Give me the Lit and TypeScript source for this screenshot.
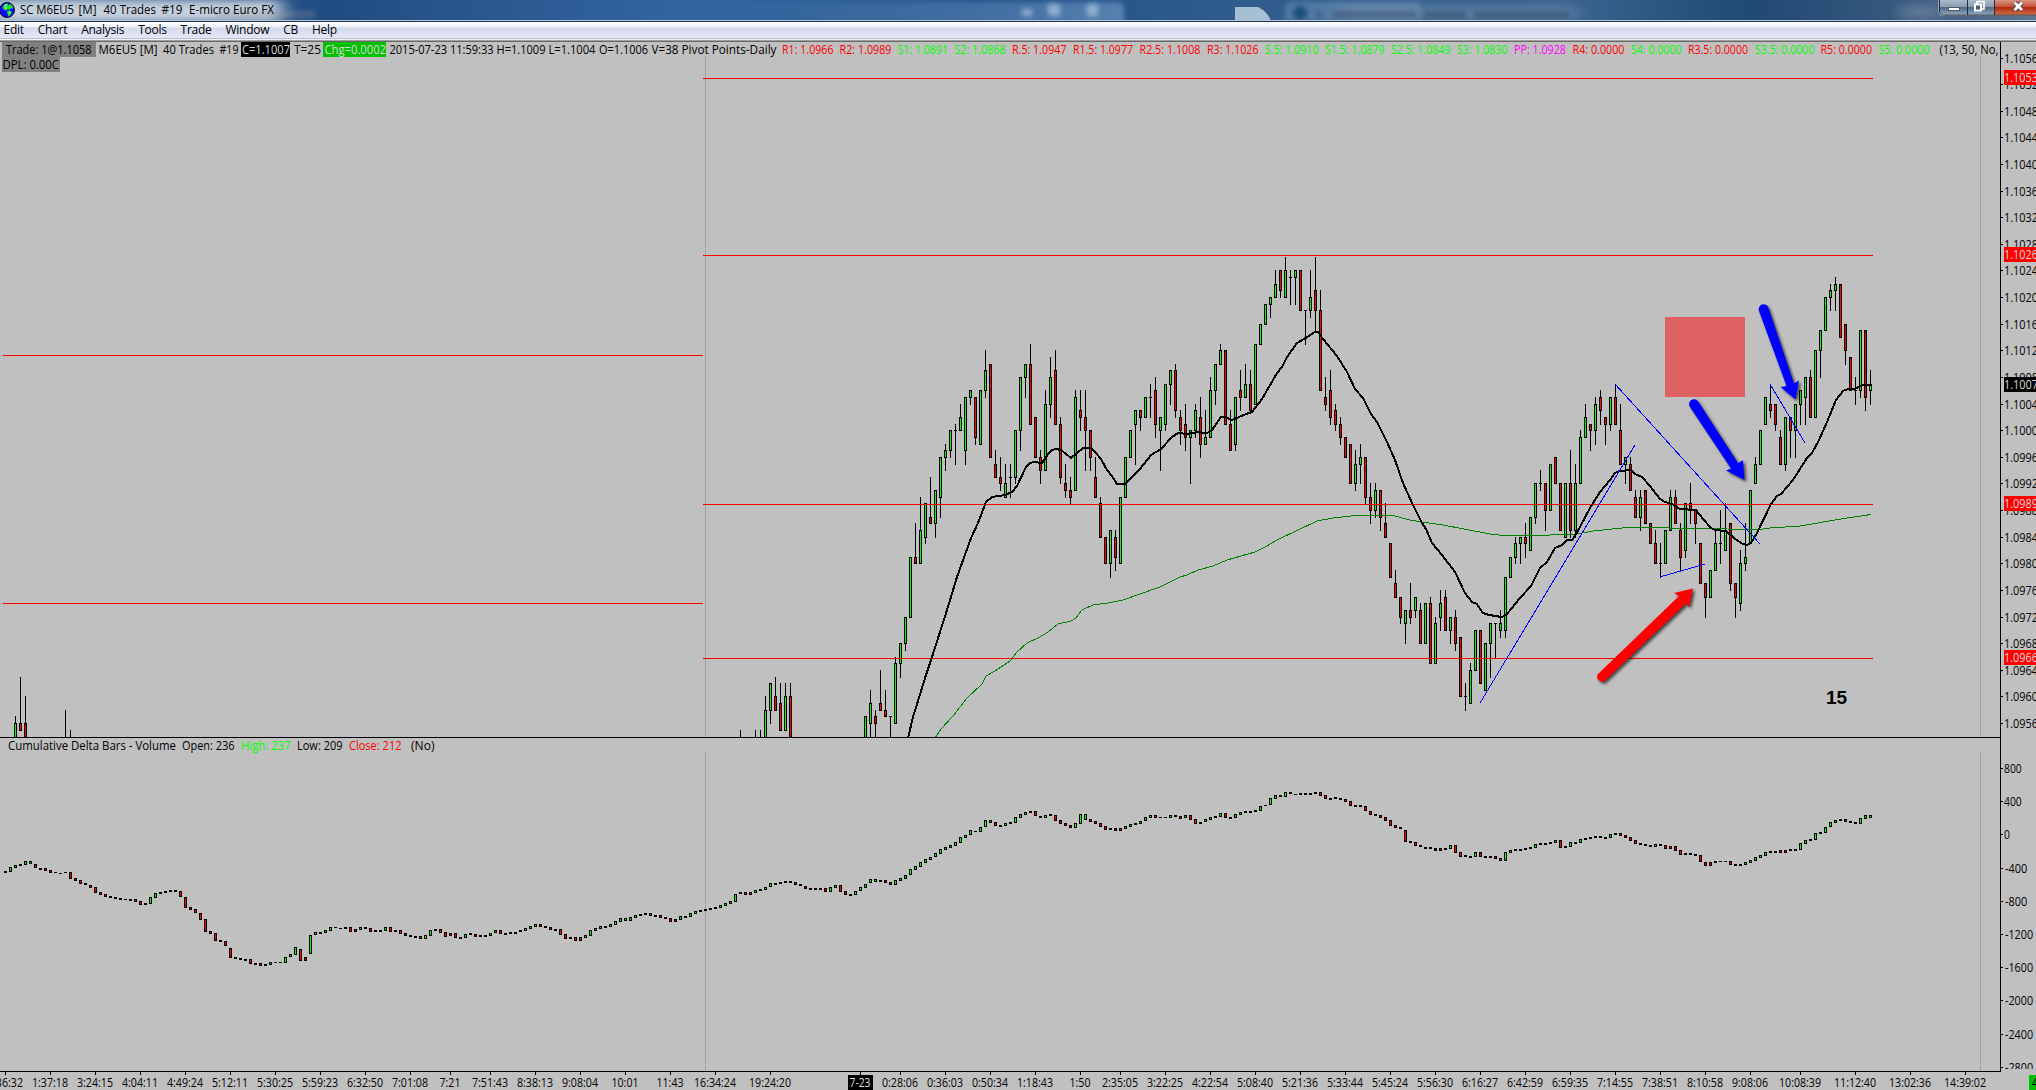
import { LitElement, html, svg, css } from "lit";
import { customElement, property } from "lit/decorators.js";

const BAR_STEP = 5;

// Candles are written high/top-bottom/low plus g (up) or r (down), in ticks
// below 1.1056. High and low are left out when the candle has no wick there.
const PRICE_RUNS: [number, string][] = [
  [15, "99/100-104g 93/100-101r 96/100-104r"],
  [65, "98/104-104g 101/104-104g"],
  [740, "101/104-104g"],
  [755, `101/104-104g 101/104-104g 96/98-104g 94-98/100g 93/96-98r 94/97-101r 94/96-101g
    94/96-104r`],
  [865, `99-104g 95/97-100/104g 98/99-100/104r 92/97-98r 95/98-99r 99-99/104g 90/91-100g
    88-91/93g 84-88/89g 75-84g 70/75-76r 66/71-76g 67-72/73g 63/69-70r 65-70/72g
    60-66/69g 58/59-60/62g 56-59/60g 55/56-56/61g 52/54-56g 51-59/61g 50-51/52g
    51-57/58r 50-58g 44/47-50/51g 46-60r 59/61-63r 60/63-64/65r 61/64-66g 61/63-63/66g
    56-63/64g 48-56/59g 46-48/51g 43/46-55r 54-60r 59/60-62/64r 50/52-62g 45/48-52/54g
    44/47-55r 54/55-63/64r 61/64-65/66r 63/65-66/67r 50/51-65g 50/53-54/56r 50/54-56/62r
    56-60/62r 60/63-66r 66/67-72r 72-76r 71-76/78g 71/72-75/77r 66-76g 60-66g 56-60g
    53-55/61g 53-54/56r 51-54g 49/51-51/54g 48/50-55/57r 54-56/62g 49-55/56g 47-49/52g
    46/47-53/54r 53/54-56/58r 52/55-57/59r 56-57/64g 52/53-56/57g 51/54-58/60r
    53/57-58g 48/50-57g 46-50/52g 43/44-46g 44-55r 53/55-59r 51-58/59g 47/50-51/53r
    46/49-51g 47/49-53r 43-52g 40-43g 37-40g 36-37/39g 32/34-36g 32-35/36r 30/32-36g
    32/33-33/37g 32-33/37g 32-38r 38-38/43g 32/36-38/39g 30/35-38/41r 35/38-50r
    48/51-52/53r 47/50-54/55r 52/53-55/56r 54/55-57/58r 57-60r 58-64r 59/61-64/65g
    58/60-61/64g 60-66/67r 64/66-68/70r 64/65-68/69g 65-69/71r 67/70-72r 73-78r
    77/79-81r 81-84/85r 83-85/88g 79/83-84/85r 81-83/84g 82/83-88r 82-88g 81/82-91r
    84/85-91g 80/82-84/86g 80/81-86r 84-86/88g 83/84-88/89r 87-96r 94/96-96/98g
    91/92-97g 86-92g 86-94r 88-95g 85-88/93g 85-85/90g 83/85-86/87g 78-86/87g 75-78g
    72/73-75/76g 72-73/76g 70/72-73/75r 69-74g 64-69/70g 62/64-64/65g 64-68/71r 61-68g
    60-64r 64-71r 64-72g 59/64-71/72r 61/64-71/72g 56/57-64g 52/54-57g 55-56/59r
    51/52-56/58g 50/51-53/55r 54-55/58r 51-55/56g 49/51-55r 52/56-61r 60-61/64g
    60/61-65r 65/66-69r 65/66-69/71g 65-70r 70-73r 71/73-76r 73/76-76/78g 71-76g
    65/66-71g 65/66-70r 70/71-75/77r 67-74/75g 64/67-68/70r 68-70/73r 73-79r 79-81/84r
    77-81g 71/73-77g 68/73-73/76g 67/71-74g 70-79/80r 79-81/84r 74/76-82/83g
    70/75-76/77g 65-73g 60/61-64g 56-61g 51-55g 49/52-53/54r 52-55/56r 56/57-61r
    54-61/62g 54-56/60r 52-56/60g 50-52/55g 48-51/55g 47/48-54r 44-54g 41-44/48g 36-41g
    34/35-36/38g 33/34-35/38g 34-42r 40-44/46r 45-50r 48/50-50/52g 41-50/51g 41-51/53r
    47/49-50/52g`],
];

// top,bottom of each delta bar, pixels below y = 700
const DELTA_BARS = `171,172 167,172 165,168 164,165 161,165 161,164 164,168 168,169 168,171
  170,173 172,172 173,173 172,172 172,179 178,181 180,184 183,185 185,188 187,193 192,195
  194,197 196,198 197,198 198,199 199,199 199,200 199,202 201,205 203,205 197,204 193,198
  192,193 191,192 190,191 190,191 191,197 197,208 207,210 209,213 213,220 219,232 231,234
  233,241 240,242 241,246 248,258 257,259 258,260 259,260 259,264 263,264 263,266 264,265
  262,265 262,262 262,262 257,263 254,257 247,255 249,261 257,261 235,254 232,235 232,233
  230,233 227,231 227,227 228,228 227,228 227,232 229,232 227,230 227,228 228,232 230,231
  230,231 227,231 227,232 230,231 230,234 233,236 235,236 236,237 236,239 235,239 230,236
  229,230 229,233 232,237 233,236 233,238 237,238 234,238 233,235 234,237 235,236 235,236
  233,236 230,233 230,234 233,234 232,234 232,233 230,232 228,231 226,229 224,227 224,227
  226,227 227,230 229,230 229,235 234,239 237,239 237,241 237,241 235,238 230,236 228,231
  226,229 226,227 224,227 221,225 218,222 218,221 217,221 215,218 214,216 213,215 213,216
  215,216 215,218 217,219 218,222 219,222 216,220 216,217 213,217 211,214 210,212 209,211
  208,210 207,209 205,208 203,206 201,204 194,202 192,194 192,195 192,195 190,193 189,191
  187,190 183,187 183,184 182,183 181,182 181,182 182,185 184,186 186,189 188,189 188,190
  188,190 188,192 187,192 185,188 185,192 191,195 194,195 191,195 187,191 184,188 179,183
  179,182 180,182 180,183 182,185 180,185 178,181 175,179 169,175 166,170 162,167 159,163
  157,160 153,157 149,154 147,150 145,148 142,146 137,143 135,138 130,135 131,131 127,132
  120,127 120,123 122,126 125,126 123,126 122,124 117,123 114,118 112,115 111,113 111,116
  116,118 115,118 114,116 115,121 120,124 123,126 125,128 123,128 114,124 114,120 119,122
  121,124 123,127 126,130 128,129 128,131 128,131 126,129 124,127 123,125 121,124 117,121
  115,118 115,118 117,117 117,117 115,118 115,117 116,119 115,118 115,120 119,124 122,124
  119,122 117,120 116,118 113,117 113,118 117,118 114,118 112,115 111,113 111,112 110,112
  106,111 105,105 98,105 95,99 95,97 92,97 92,94 94,94 93,95 93,95 93,95 92,93 92,96 95,99
  98,99 97,99 98,99 99,102 101,106 105,106 105,107 106,111 111,115 114,116 115,118 117,121
  120,126 125,128 127,129 130,142 141,143 142,146 145,147 147,148 147,149 148,151 148,151
  148,149 145,149 145,153 152,157 155,157 156,157 152,157 152,157 156,158 156,158 156,159
  158,161 152,161 150,153 149,151 149,150 148,150 147,149 144,148 143,145 143,144 142,144
  140,143 140,148 146,148 142,147 142,143 139,143 138,140 137,139 136,138 136,138 137,138
  134,138 133,135 133,136 135,138 137,141 140,144 143,145 144,146 145,147 144,147 144,146
  145,149 146,149 146,151 150,155 153,155 153,155 154,156 155,162 162,166 162,166 161,163
  161,161 161,161 161,165 164,165 164,165 162,165 160,163 157,161 155,158 152,156 151,153
  151,152 150,153 150,153 149,151 149,150 143,150 140,144 139,141 133,140 132,134 127,133
  122,127 120,123 119,121 119,122 121,123 122,124 118,124 115,119 115,118`;

const FAST_MA = `908,738 913,717 926,675 932,657 947,610 957,577 971,538 978,523 986,502 992,497
  1005,495 1012,492 1017,486 1026,467 1030,463 1034,462 1042,463 1048,454 1052,450 1056,449
  1061,450 1066,454 1071,458 1077,453 1083,448 1091,448 1095,452 1101,459 1107,470 1112,476
  1117,484 1125,484 1130,479 1140,469 1151,455 1161,449 1172,437 1178,433 1188,434 1197,432
  1207,433 1212,430 1221,417 1225,417 1232,420 1246,414 1252,412 1262,399 1277,373 1282,367
  1287,357 1297,343 1304,339 1315,332 1318,332 1323,339 1337,356 1347,372 1355,389 1363,398
  1371,414 1377,422 1387,442 1395,460 1403,483 1412,503 1422,523 1426,529 1432,543 1442,555
  1455,572 1465,593 1472,602 1477,604 1482,612 1485,614 1495,616 1502,617 1507,614 1520,598
  1531,586 1540,568 1547,562 1555,548 1562,545 1567,540 1572,540 1575,536 1580,527 1590,508
  1600,492 1610,480 1615,473 1619,471 1631,470 1635,474 1642,477 1650,486 1660,499 1665,502
  1672,504 1680,509 1696,510 1703,519 1711,528 1715,530 1726,531 1735,539 1743,544 1747,545
  1751,543 1757,533 1771,504 1777,496 1781,494 1793,480 1807,458 1812,453 1819,440 1827,422
  1836,400 1843,391 1848,389 1855,389 1862,385 1872,385`;

const SLOW_MA = `935,738 941,729 953,716 967,698 982,684 986,676 995,671 1010,661 1017,652
  1027,643 1038,638 1048,632 1058,624 1071,621 1076,618 1082,610 1093,605 1108,603 1123,600
  1140,594 1160,587 1180,577 1187,575 1198,570 1213,566 1227,560 1255,552 1265,547 1277,540
  1317,521 1333,518 1355,515.5 1393,515.5 1410,520 1422,522 1443,525 1490,534 1503,535.5
  1537,535.5 1577,534 1593,531 1627,527.5 1650,527.5 1687,528.5 1727,529 1760,529.5 1770,528
  1800,526 1847,518 1871,514.5`;

const TREND_LINES = [
  [1480, 703, 1635, 445],
  [1615, 384, 1760, 544],
  [1660, 577, 1705, 564],
  [1770, 384, 1805, 443],
];

const PIVOT_LINES = [
  [3, 355, 703],
  [3, 603, 703],
  [703, 78, 1873],
  [703, 255, 1873],
  [703, 504, 1873],
  [703, 658, 1873],
];

// text, left edge, width, tone
const READOUTS: [string, number, number, string][] = [
  ["Trade: 1@1.1058", 6, 85.5, "ink"],
  ["M6EU5 [M]", 98.5, 59, "ink"],
  ["40 Trades", 163, 51, "ink"],
  ["#19", 219.5, 19, "ink"],
  ["C=1.1007", 242, 48, "silver"],
  ["T=25", 294, 27, "ink"],
  ["Chg=0.0002", 324.5, 61.5, "silver"],
  ["2015-07-23 11:59:33", 389.5, 104, "ink"],
  ["H=1.1009", 496.5, 49, "ink"],
  ["L=1.1004", 548.5, 47, "ink"],
  ["O=1.1006", 599, 49, "ink"],
  ["V=38", 651.5, 27, "ink"],
  ["Pivot Points-Daily", 681.5, 95, "ink"],
  ["R1: 1.0966", 782, 51.5, "red"],
  ["R2: 1.0989", 839.5, 52, "red"],
  ["S1: 1.0891", 897.5, 50.5, "lime"],
  ["S2: 1.0868", 954.5, 51, "lime"],
  ["R.5: 1.0947", 1012, 54.5, "red"],
  ["R1.5: 1.0977", 1073, 60, "red"],
  ["R2.5: 1.1008", 1139.5, 61, "red"],
  ["R3: 1.1026", 1207, 51.5, "red"],
  ["S.5: 1.0910", 1265, 53.5, "lime"],
  ["S1.5: 1.0879", 1325, 59.5, "lime"],
  ["S2.5: 1.0849", 1391, 59.5, "lime"],
  ["S3: 1.0830", 1457, 50.5, "lime"],
  ["PP: 1.0928", 1514, 52, "magenta"],
  ["R4: 0.0000", 1572.5, 52, "red"],
  ["S4: 0.0000", 1631, 50.5, "lime"],
  ["R3.5: 0.0000", 1688, 60, "red"],
  ["S3.5: 0.0000", 1755, 59.5, "lime"],
  ["R5: 0.0000", 1820.5, 51.5, "red"],
  ["S5: 0.0000", 1878.5, 51, "lime"],
  ["(13, 50, No,", 1939.5, 59, "ink"],
];

const DELTA_READOUTS: [string, number, number, string][] = [
  ["Cumulative Delta Bars - Volume", 8, 168, "ink"],
  ["Open: 236", 182, 52.5, "ink"],
  ["High: 237", 241, 49.5, "lime"],
  ["Low: 209", 297, 45.5, "ink"],
  ["Close: 212", 349, 52.5, "red"],
  ["(No)", 411, 23.5, "ink"],
];

const TIMES: [string, number][] = [
  ["0:36:32", 5], ["1:37:18", 50], ["3:24:15", 95], ["4:04:11", 140], ["4:49:24", 185],
  ["5:12:11", 230], ["5:30:25", 275], ["5:59:23", 320], ["6:32:50", 365], ["7:01:08", 410],
  ["7:21", 450], ["7:51:43", 490], ["8:38:13", 535], ["9:08:04", 580], ["10:01", 625],
  ["11:43", 670], ["16:34:24", 715], ["19:24:20", 770], ["7-23", 860], ["0:28:06", 900],
  ["0:36:03", 945], ["0:50:34", 990], ["1:18:43", 1035], ["1:50", 1080], ["2:35:05", 1120],
  ["3:22:25", 1165], ["4:22:54", 1210], ["5:08:40", 1255], ["5:21:36", 1300],
  ["5:33:44", 1345], ["5:45:24", 1390], ["5:56:30", 1435], ["6:16:27", 1480],
  ["6:42:59", 1525], ["6:59:35", 1570], ["7:14:55", 1615], ["7:38:51", 1660],
  ["8:10:58", 1705], ["9:08:06", 1750], ["10:08:39", 1800], ["11:12:40", 1855],
  ["13:02:36", 1910], ["14:39:02", 1965],
];

const PRICE_TAGS: [string, number, string][] = [
  ["1.1053", 70, "red"],
  ["1.1026", 247, "red"],
  ["1.1007", 377, "ink"],
  ["1.0989", 496, "red"],
  ["1.0966", 650, "red"],
];

const MENU = ["Edit", "Chart", "Analysis", "Tools", "Trade", "Window", "CB", "Help"];

const tickY = (tick: number) => Math.floor(58 + 6.656 * tick);

function drawBody(x: number, top: number, height: number, up: boolean) {
  return svg`
    <rect x=${x - 1} y=${top} width="3" height=${height}></rect>
    ${height > 2
      ? svg`<rect class=${up ? "up" : "down"} x=${x} y=${top + 1} width="1" height=${height - 2}></rect>`
      : null}
  `;
}

function drawLabel(text: string, x: number, y: number, width: number, tone = "ink") {
  return svg`<text class=${tone} x=${x} y=${y} textLength=${width} lengthAdjust="spacingAndGlyphs">${text}</text>`;
}

const chartStyles = css`
  :host {
    display: block;
    overflow: hidden;
  }

  svg {
    display: block;
    width: 100%;
    height: 100%;
  }

  text {
    font: 12px "Open Sans", "Noto Sans", sans-serif;
  }

  .crisp {
    shape-rendering: crispEdges;
  }

  .ink { fill: #000; }
  .red { fill: #f00; }
  .lime { fill: #0f0; }
  .magenta { fill: #f0f; }
  .silver { fill: #d8d8d8; }
  .up { fill: #0f0; }
  .down { fill: #f00; }

  .session {
    stroke: #808080;
    stroke-dasharray: 1 1;
  }
`;

@customElement("title-bar")
export class TitleBar extends LitElement {
  static override styles = css`
    :host {
      display: grid;
      grid-template: 22px / 1fr;
      overflow: hidden;
    }

    .glass,
    .content {
      grid-area: 1 / 1;
    }

    .glass {
      width: 100%;
      height: 22px;
    }

    .content {
      display: flex;
      align-items: flex-start;
      justify-content: space-between;
    }

    .caption {
      display: flex;
      align-items: center;
      height: 20px;
    }

    .globe {
      width: 16px;
      height: 16px;
    }

    .title {
      width: 260px;
      height: 20px;
      margin-left: 4px;
    }

    .title text {
      font: 12.5px "Open Sans", "Noto Sans", sans-serif;
    }

    .controls {
      width: 100px;
      height: 18px;
    }
  `;

  override render() {
    return html`
      <svg class="glass" viewBox="0 0 2036 22" preserveAspectRatio="none">
        <defs>
          <linearGradient id="aero">
            <stop offset="0" stop-color="#4f759f"></stop>
            <stop offset="0.16" stop-color="#1f4c82"></stop>
            <stop offset="0.26" stop-color="#2c5b94"></stop>
            <stop offset="0.34" stop-color="#33659f"></stop>
            <stop offset="0.5" stop-color="#225389"></stop>
            <stop offset="0.66" stop-color="#34608f"></stop>
            <stop offset="0.77" stop-color="#3a648f"></stop>
            <stop offset="0.86" stop-color="#204974"></stop>
            <stop offset="0.93" stop-color="#36587e"></stop>
            <stop offset="1" stop-color="#5d7590"></stop>
          </linearGradient>
          <linearGradient id="pane">
            <stop offset="0" stop-color="#5f8cbf" stop-opacity="0"></stop>
            <stop offset="1" stop-color="#6f97c3"></stop>
          </linearGradient>
          <filter id="soft" x="-20%" y="-100%" width="140%" height="300%">
            <feGaussianBlur stdDeviation="2.5"></feGaussianBlur>
          </filter>
          <filter id="haze" x="-20%" y="-200%" width="140%" height="500%">
            <feGaussianBlur stdDeviation="9 4"></feGaussianBlur>
          </filter>
        </defs>
        <rect width="2036" height="22" fill="url(#aero)"></rect>
        <rect x="-10" y="0" width="292" height="22" fill="#d5dde5" opacity="0.9" filter="url(#haze)"></rect>
        <rect x="215" y="11" width="100" height="7" fill="#8d9299" opacity="0.35" filter="url(#soft)"></rect>
        <path d="M700 2H1117Q1124 2 1124 9V26H700Z" fill="url(#pane)" opacity="0.65" filter="url(#soft)"></path>
        <g fill="#bdd2e8" opacity="0.6" filter="url(#soft)">
          <rect x="1022" y="9" width="10" height="7"></rect>
          <rect x="1048" y="4" width="12" height="12"></rect>
          <rect x="1087" y="4" width="11" height="12"></rect>
        </g>
        <path d="M1235 7H1258Q1268 12 1271 21H1235Z" fill="#c3d8e6" opacity="0.8"></path>
        <path d="M1285 22V8Q1285 2 1292 2H1420V22Z" fill="#7da0bf" opacity="0.4" filter="url(#soft)"></path>
        <circle cx="1300" cy="13" r="7" fill="#174f79" filter="url(#soft)"></circle>
        <rect x="1336" y="6" width="240" height="14" fill="#86a0bc" opacity="0.45" filter="url(#haze)"></rect>
        <g fill="#20364f" opacity="0.4" filter="url(#soft)">
          <rect x="1317" y="11" width="5" height="7"></rect>
          <rect x="1333" y="11" width="84" height="7"></rect>
          <rect x="1424" y="11" width="42" height="7"></rect>
          <rect x="1474" y="11" width="95" height="7"></rect>
        </g>
        <rect x="1900" y="5" width="40" height="14" fill="#8296ab" opacity="0.5" filter="url(#haze)"></rect>
        <rect y="20" width="2036" height="1" fill="#b5c4d8"></rect>
        <rect y="21" width="2036" height="1" fill="#26344c"></rect>
      </svg>
      <div class="content">
        <div class="caption">
          <svg class="globe" viewBox="0 0 16 16">
            <circle cx="7" cy="8" r="7.5" fill="#0a0aff" stroke="#101018"></circle>
            <path
              d="M3 4L6 1.500 8 1.500 8 3.500 10 2 13 4.500 13 7 11 6 9.500 8 8 7 6.500 8.500 4 8 2.500 6ZM7 9L10 8.500 12 10 10.500 13 8.500 14.500 7.500 12Z"
              fill="#1fe02c"
            ></path>
            <path d="M4.500 4L6.500 3M5 6.500L7 5.500M8.500 11L10 10" stroke="#d8ffe0"></path>
          </svg>
          <svg class="title" viewBox="0 0 260 20">
            <text x="0" y="14" textLength="54" lengthAdjust="spacingAndGlyphs">SC M6EU5</text>
            <text x="58.500" y="14" textLength="18" lengthAdjust="spacingAndGlyphs">[M]</text>
            <text x="83.500" y="14" textLength="52.500" lengthAdjust="spacingAndGlyphs">40 Trades</text>
            <text x="141.500" y="14" textLength="21" lengthAdjust="spacingAndGlyphs">#19</text>
            <text x="169" y="14" textLength="85" lengthAdjust="spacingAndGlyphs">E-micro Euro FX</text>
          </svg>
        </div>
        <svg class="controls" viewBox="1936 0 100 18">
          <defs>
            <linearGradient id="steel" x2="0" y2="1">
              <stop offset="0" stop-color="#a9b9c9"></stop>
              <stop offset="0.45" stop-color="#8c9eb2"></stop>
              <stop offset="0.5" stop-color="#526a84"></stop>
              <stop offset="1" stop-color="#8fa8bf"></stop>
            </linearGradient>
            <linearGradient id="alarm" x2="0" y2="1">
              <stop offset="0" stop-color="#d79480"></stop>
              <stop offset="0.45" stop-color="#c7533a"></stop>
              <stop offset="0.5" stop-color="#b02a10"></stop>
              <stop offset="1" stop-color="#d1704a"></stop>
            </linearGradient>
          </defs>
          <path d="M1938.500 0V11Q1938.500 16 1943.500 16H2036V0Z" fill="#d3dde7"></path>
          <path d="M1939.500 0V11Q1939.500 15 1943.500 15H1967V0Z" fill="url(#steel)"></path>
          <rect x="1967" width="27.500" height="15" fill="url(#steel)"></rect>
          <rect x="1994.500" width="41.500" height="15" fill="url(#alarm)"></rect>
          <path d="M1939.500 0V11Q1939.500 15.200 1943.500 15.200H2036M1967.500 0V15M1994.500 0V15" fill="none" stroke="#26303c"></path>
          <rect x="1948.500" y="7.500" width="11" height="3" fill="#fff" stroke="#4b5866"></rect>
          <path d="M1977 4V1.500H1984V9H1981" fill="none" stroke="#fff" stroke-width="1.600"></path>
          <rect x="1975" y="4.500" width="6" height="6" fill="#4b5866" stroke="#fff" stroke-width="2"></rect>
          <path d="M2014.500 2.500L2022 10M2022 2.500L2014.500 10" stroke="#5a4644" stroke-width="5"></path>
          <path d="M2014.500 2.500L2022 10M2022 2.500L2014.500 10" stroke="#fff" stroke-width="2.800"></path>
        </svg>
      </div>
    `;
  }
}

@customElement("menu-bar")
export class MenuBar extends LitElement {
  static override styles = css`
    :host {
      display: flex;
      align-items: center;
      gap: 14px;
      box-sizing: border-box;
      height: 20px;
      padding: 0 3.5px 5px;
      background: linear-gradient(
        #fff 0,
        #f1f4fa 4px,
        #e8ecf6 5px,
        #d5dbee 6px,
        #e3e7f5 16px,
        #b9bfd2 16px,
        #b9bfd2 17px,
        #f2f2f2 17px,
        #f2f2f2 18px,
        #a0a0a0 18px,
        #a0a0a0 19px,
        #696969 19px
      );
      font: 12px/16px "Open Sans", "Noto Sans", sans-serif;
      letter-spacing: -0.27px;
      color: #000;
    }
  `;

  override render() {
    return MENU.map((item) => html`<span>${item}</span>`);
  }
}

@customElement("price-pane")
export class PricePane extends LitElement {
  static override styles = [
    chartStyles,
    css`
      .note {
        font: bold 19px "Liberation Sans", Arial, sans-serif;
      }

      .shadow {
        filter: drop-shadow(2px 2px 1.5px rgba(0, 0, 0, 0.65));
      }
    `,
  ];

  private renderCandle(x: number, code: string) {
    const match = /^(?:(\d+)\/)?(\d+)-(\d+)(?:\/(\d+))?([gr])$/.exec(code);
    if (!match) return null;
    const top = tickY(Number(match[2]));
    const bottom = tickY(Number(match[3]));
    const high = match[1] ? tickY(Number(match[1])) : top;
    const low = match[4] ? tickY(Number(match[4])) : bottom;
    return svg`
      <rect x=${x} y=${high} width="1" height=${low - high + 1}></rect>
      ${drawBody(x, top, bottom - top + 1, match[5] === "g")}
    `;
  }

  override render() {
    return html`
      <svg viewBox="0 42 2000 695">
        <g class="crisp">
          <rect x="2" y="42" width="94" height="15" fill="#808080"></rect>
          <rect x="2" y="57" width="58" height="15" fill="#808080"></rect>
          <rect x="241" y="42" width="49" height="15"></rect>
          <rect x="323" y="42" width="63" height="15" fill="#00c000"></rect>
          <path class="session" d="M705.500 57V737M1980.500 57V737"></path>
          ${PRICE_RUNS.map(([start, run]) =>
            run.trim().split(/\s+/).map((code, i) => this.renderCandle(start + i * BAR_STEP, code))
          )}
          ${PIVOT_LINES.map(([x, y, end]) => svg`<rect class="red" x=${x} y=${y} width=${end - x} height="1"></rect>`)}
          <polyline points=${SLOW_MA} fill="none" stroke="#008000"></polyline>
          <polyline points=${FAST_MA} fill="none" stroke="#000" stroke-width="2"></polyline>
          ${TREND_LINES.map(([x1, y1, x2, y2]) => svg`<line x1=${x1} y1=${y1} x2=${x2} y2=${y2} stroke="#00f"></line>`)}
          <rect x="1665" y="317" width="80" height="80" fill="#de6161"></rect>
        </g>
        <g class="shadow" fill="#00f">
          <path d="M1759 311A4.900 4.900 0 0 1 1768.300 307.500L1794 383.500 1799 380.500 1795.500 399.500 1780.500 387 1786.500 386Z"></path>
          <path d="M1690 407A4.900 4.900 0 0 1 1698 401.200L1738 463 1743 460.300 1744.500 480 1726 470.500 1731 468.500Z"></path>
        </g>
        <g class="shadow" fill="#f00">
          <path d="M1598 674A4.900 4.900 0 0 0 1604.500 681L1686.500 603 1689 607.500 1693 588.500 1674 593 1679 596Z"></path>
        </g>
        ${READOUTS.map(([text, x, width, tone]) => drawLabel(text, x, 54, width, tone))}
        ${drawLabel("DPL: 0.00C", 2.5, 69, 56.5)}
        <text class="note" x="1826" y="704">15</text>
      </svg>
    `;
  }
}

@customElement("delta-pane")
export class DeltaPane extends LitElement {
  static override styles = chartStyles;

  private renderBars() {
    let previous = 172;
    return DELTA_BARS.trim().split(/\s+/).map((pair, i) => {
      const [top, bottom] = pair.split(",").map(Number);
      const middle = (top + bottom) / 2;
      const up = middle < previous;
      previous = middle;
      const span = bottom - top;
      return drawBody((i + 1) * BAR_STEP, 700 + top, span > 1 ? span : span + 1, up);
    });
  }

  override render() {
    return html`
      <svg viewBox="0 737 2000 335">
        <g class="crisp">
          <rect y="737" width="2000" height="1"></rect>
          <path class="session" d="M705.500 753V1071M1980.500 753V1071"></path>
          ${this.renderBars()}
          <rect y="1071" width="2000" height="1"></rect>
        </g>
        ${DELTA_READOUTS.map(([text, x, width, tone]) => drawLabel(text, x, 750, width, tone))}
      </svg>
    `;
  }
}

@customElement("value-axis")
export class ValueAxis extends LitElement {
  static override styles = chartStyles;

  @property()
  scale: "price" | "delta" = "price";

  private renderPrice() {
    return html`
      <svg viewBox="2000 42 36 695">
        <rect x="2000" y="42" width="1" height="695"></rect>
        ${Array.from({ length: 26 }, (_, i) => {
          const y = tickY(i * 4);
          const price = ((11056 - i * 4) / 10000).toFixed(4);
          return svg`
            <rect x="2001" y=${y} width="2" height="1"></rect>
            ${drawLabel(price, 2004, y + 5, 34)}
          `;
        })}
        ${PRICE_TAGS.map(([text, y, tone]) => svg`
          <rect class=${tone} x="2004" y=${y} width="32" height="15"></rect>
          ${drawLabel(text, 2004, y + 12, 34, "silver")}
        `)}
      </svg>
    `;
  }

  private renderDelta() {
    return html`
      <svg viewBox="2000 737 36 335">
        <rect x="2000" y="737" width="1" height="335"></rect>
        ${Array.from({ length: 10 }, (_, i) => {
          const value = 800 - i * 400;
          const y = Math.round(768 + i * 33.2);
          const label = String(value);
          const digits = label.replace("-", "").length;
          const width = digits * 5.9 + (value < 0 ? 4.5 : 0);
          return svg`
            <rect x="2001" y=${y} width="2" height="1"></rect>
            ${drawLabel(label, value < 0 ? 2005 : 2004, y + 5, width)}
          `;
        })}
        <rect x="2003" y="1069" width="33" height="3" fill="#c0c0c0"></rect>
      </svg>
    `;
  }

  override render() {
    return this.scale === "price" ? this.renderPrice() : this.renderDelta();
  }
}

@customElement("time-axis")
export class TimeAxis extends LitElement {
  static override styles = chartStyles;

  override render() {
    return html`
      <svg viewBox="0 1072 2036 18">
        <rect x="848" y="1075" width="25" height="15"></rect>
        ${TIMES.map(([text, x]) => {
          const colons = text.split(/[:-]/).length - 1;
          const width = (text.length - colons) * 6 + colons * 3;
          return svg`
            <rect x=${x} y="1072" width="1" height="3"></rect>
            ${drawLabel(text, x - width / 2, 1087, width, text === "7-23" ? "silver" : "ink")}
          `;
        })}
        <rect x="2029" y="1075" width="7" height="15" fill="#00c000"></rect>
        ${drawLabel("4", 2032, 1087, 6)}
      </svg>
    `;
  }
}

@customElement("app-root")
export class AppRoot extends LitElement {
  static override styles = css`
    :host {
      display: grid;
      grid-template-rows: 22px 20px 1048px;
      width: 2036px;
      height: 1090px;
      overflow: hidden;
      background: #c0c0c0;
    }

    .workspace {
      display: grid;
      grid-template: 695px 335px 18px / 2000px 36px;
    }

    .times {
      grid-column: 1 / 3;
    }
  `;

  override render() {
    return html`
      <title-bar></title-bar>
      <menu-bar></menu-bar>
      <div class="workspace">
        <price-pane></price-pane>
        <value-axis scale="price"></value-axis>
        <delta-pane></delta-pane>
        <value-axis scale="delta"></value-axis>
        <time-axis class="times"></time-axis>
      </div>
    `;
  }
}
